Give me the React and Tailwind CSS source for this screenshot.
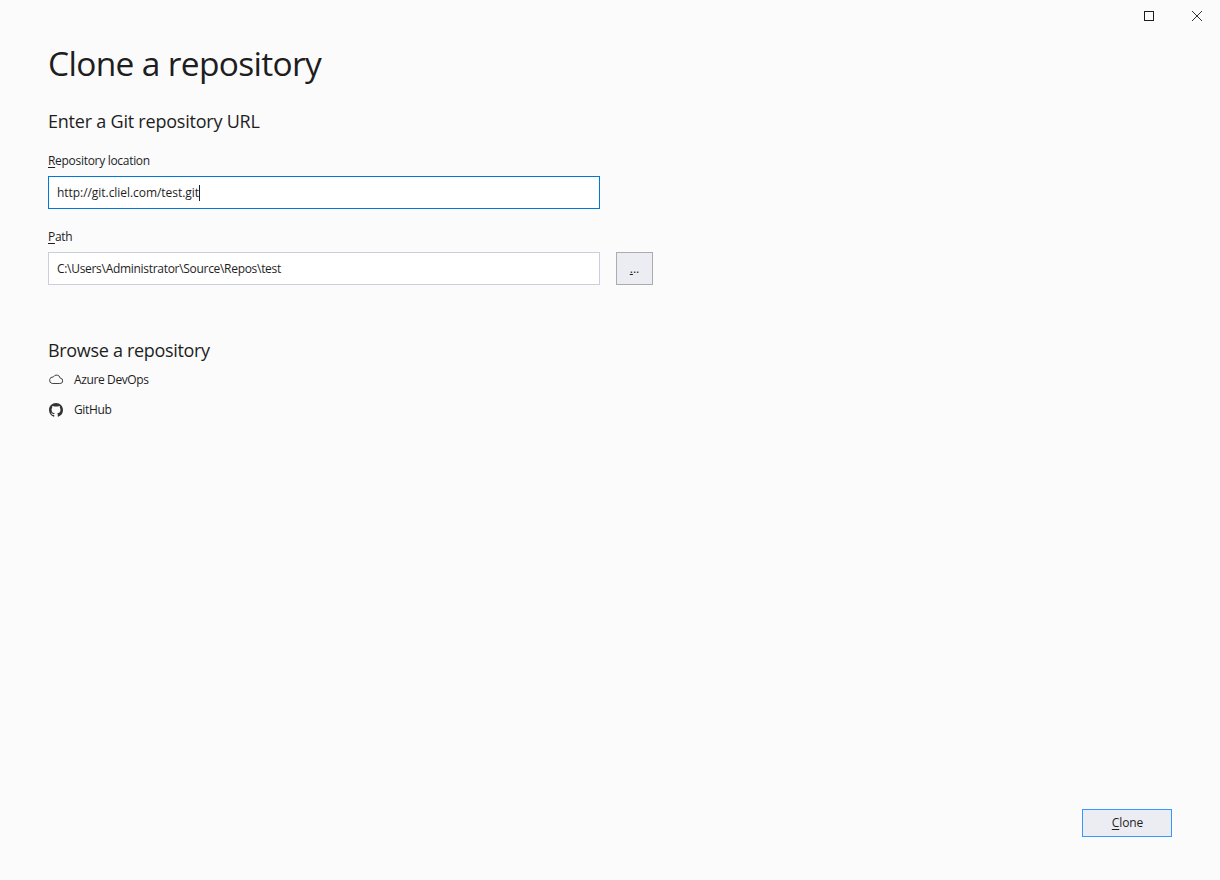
const FONT = "font-['Open_Sans','Noto_Sans',sans-serif]";

function Label({ letter, rest }) {
  return (
    <div className="h-[18px] text-[12px] leading-[18px] tracking-[-0.3px] text-[#1e1e1e]">
      <span className="underline underline-offset-2">{letter}</span>
      {rest}
    </div>
  );
}

export default function App() {
  return (
    <div className={`flex h-[880px] w-[1220px] flex-col overflow-hidden bg-[#fbfbfc] ${FONT}`}>
      {/* Window buttons */}
      <div className="flex h-[32px] shrink-0 justify-end">
        <button className="flex h-[32px] w-[48px] items-center justify-center">
          <svg width="10" height="10" viewBox="0 0 10 10" fill="none">
            <rect x="0.5" y="0.5" width="9" height="9" stroke="#1e1e1e" />
          </svg>
        </button>
        <button className="flex h-[32px] w-[47px] items-center justify-center pl-px">
          <svg width="10" height="10" viewBox="0 0 10 10" fill="none">
            <path d="M0 0L10 10M10 0L0 10" stroke="#333333" strokeWidth="1" />
          </svg>
        </button>
      </div>

      <div className="flex flex-1 flex-col px-[48px]">
        <h1 className="mt-[7px] h-[48px] text-[33.5px] leading-[48px] tracking-[-0.67px] text-[#1e1e1e]">
          Clone a repository
        </h1>

        <h2 className="mt-[22px] h-[24px] text-[18px] leading-[24px] tracking-[-0.22px] text-[#1e1e1e]">
          Enter a Git repository URL
        </h2>

        <div className="mt-[19px]">
          <Label letter="R" rest="epository location" />
        </div>
        <div className="mt-[6px] flex h-[33px] w-[552px] items-center border border-[#0078d7] bg-white px-[8px] text-[12px] tracking-[-0.05px] text-[#1e1e1e]">
          <span>http://git.cliel.com/test.git</span>
          <span className="h-[16px] w-px bg-[#1e1e1e]" />
        </div>

        <div className="mt-[19px]">
          <Label letter="P" rest="ath" />
        </div>
        <div className="mt-[6px] flex items-center gap-[16px]">
          <div className="flex h-[33px] w-[552px] items-center border border-[#cccedb] bg-white px-[8px] text-[12px] tracking-[-0.3px] text-[#1e1e1e]">
            C:\Users\Administrator\Source\Repos\test
          </div>
          <button className="flex h-[33px] w-[37px] items-end justify-center border border-[#acacac] bg-[#ecedf2] pb-[6px] text-[12px] leading-[18px] text-[#1e1e1e]">
            <span className="underline underline-offset-1">.</span>..
          </button>
        </div>

        <h2 className="mt-[53px] h-[24px] text-[18px] leading-[24px] tracking-[-0.32px] text-[#1e1e1e]">
          Browse a repository
        </h2>

        <div className="mt-[9px] flex h-[18px] items-center gap-[11px] pl-px text-[12px] tracking-[-0.38px] text-[#1e1e1e]">
          <svg width="14" height="14" viewBox="0 0 14 14" fill="none">
            <path
              d="M3.2 10.5h7.6a2.7 2.7 0 0 0 .4-5.4A3.7 3.7 0 0 0 4.3 4 3.3 3.3 0 0 0 3.2 10.5z"
              stroke="#444444"
              strokeWidth="1"
            />
          </svg>
          Azure DevOps
        </div>
        <div className="mt-[12px] flex h-[18px] items-center gap-[11px] pl-px text-[12px] tracking-[-0.35px] text-[#1e1e1e]">
          <svg width="14" height="14" viewBox="0 0 16 16" fill="#333333">
            <path d="M8 0C3.58 0 0 3.58 0 8c0 3.54 2.29 6.53 5.47 7.59.4.07.55-.17.55-.38 0-.19-.01-.82-.01-1.49-2.01.37-2.53-.49-2.69-.94-.09-.23-.48-.94-.82-1.13-.28-.15-.68-.52-.01-.53.63-.01 1.08.58 1.23.82.72 1.21 1.87.87 2.33.66.07-.52.28-.87.51-1.07-1.78-.2-3.64-.89-3.64-3.95 0-.87.31-1.59.82-2.15-.08-.2-.36-1.02.08-2.12 0 0 .67-.21 2.2.82.64-.18 1.32-.27 2-.27s1.36.09 2 .27c1.53-1.04 2.2-.82 2.2-.82.44 1.1.16 1.92.08 2.12.51.56.82 1.27.82 2.15 0 3.07-1.87 3.75-3.65 3.95.29.25.54.73.54 1.48 0 1.07-.01 1.93-.01 2.2 0 .21.15.46.55.38A8.01 8.01 0 0 0 16 8c0-4.42-3.58-8-8-8z" />
          </svg>
          GitHub
        </div>

        <div className="mb-[43px] mt-auto flex justify-end">
          <button className="h-[28px] w-[90px] border border-[#3399ff] bg-[#ecedf2] pl-px text-[12px] tracking-[-0.1px] text-[#1e1e1e]">
            <span className="underline underline-offset-2">C</span>lone
          </button>
        </div>
      </div>
    </div>
  );
}
